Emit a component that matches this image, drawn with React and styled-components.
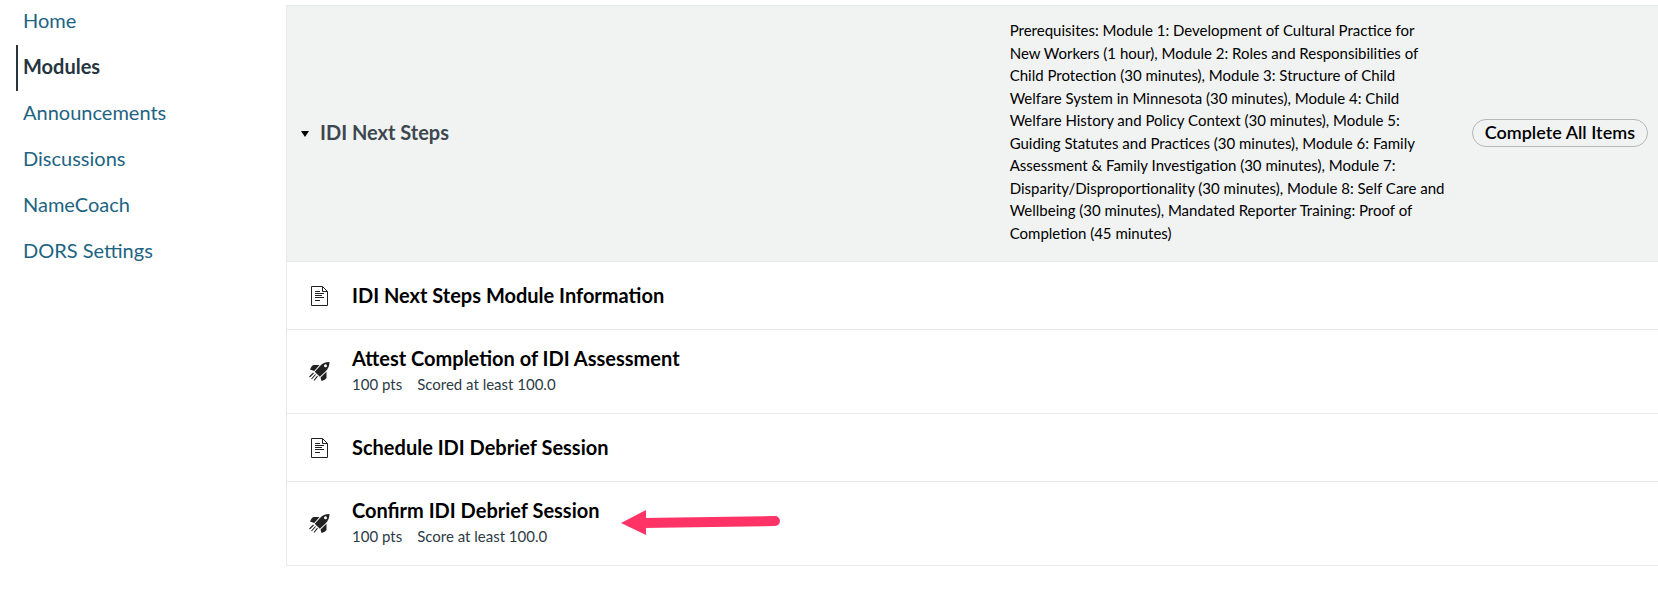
import React from "react";
import styled, { createGlobalStyle } from "styled-components";

const GlobalStyle = createGlobalStyle`
  *, *::before, *::after { box-sizing: border-box; }
  body {
    margin: 0;
    background: #fff;
    color: #000;
    font-family: Lato, "Liberation Sans", sans-serif;
    font-size: 20px;
    line-height: 24px;
  }
`;

const Page = styled.div`
  display: flex;
  align-items: flex-start;
`;

const CourseNav = styled.nav`
  flex: 0 0 286px;
  padding-left: 16px;
  margin-top: -1px;
`;

const NavList = styled.ul`
  list-style: none;
  margin: 0;
  padding: 0;
`;

const NavLink = styled.a`
  display: block;
  padding: 8px 5px 12px;
  line-height: 26px;
  border-left: 2px solid ${({ $active }) => ($active ? "#273540" : "transparent")};
  color: ${({ $active }) => ($active ? "#273540" : "#1d6482")};
  font-weight: ${({ $active }) => ($active ? 700 : 400)};
  text-decoration: none;
`;

const Module = styled.section`
  flex: 1;
  min-width: 0;
  margin: 5px 0 24px;
  border: 1px solid #e8eaea;
  border-right: 0;
`;

const ModuleHeader = styled.header`
  display: flex;
  align-items: center;
  gap: 24px;
  padding: 13px 10px 15px 13px;
  background: #f1f3f3;
`;

const ModuleName = styled.h2`
  flex: 1;
  margin: 0;
  font-size: 20px;
`;

const Toggle = styled.button`
  display: flex;
  align-items: center;
  gap: 10px;
  padding: 0 0 2px;
  border: 0;
  background: none;
  color: #3d474f;
  font: inherit;
  cursor: pointer;
`;

const Caret = styled.svg`
  width: 10px;
  height: 6px;
  margin-top: 4px;
  fill: #000;
`;

const Prerequisites = styled.p`
  flex: 0 1 438px;
  margin: 0;
  padding-bottom: 2px;
  font-size: 15px;
  line-height: 1.5;
`;

const RequirementPill = styled.span`
  flex: none;
  padding: 0 12px 2px;
  border: 1px solid #b4b8b9;
  border-radius: 14px;
  font-family: "Lato Semibold", Lato, "Liberation Sans", sans-serif;
  font-size: 18px;
  line-height: 24px;
  font-weight: 600;
`;

const ItemList = styled.ul`
  list-style: none;
  margin: 0;
  padding: 0;
`;

const Item = styled.li`
  display: flex;
  align-items: center;
  gap: 21px;
  padding: 15px 22px;
  min-height: 68px;
  border-top: 1px solid #e8eaea;
`;

const ItemIcon = styled.svg`
  flex: none;
  width: 22px;
  height: 22px;
`;

const ItemText = styled.div`
  padding-bottom: 2px;
`;

const ItemTitle = styled.a`
  display: block;
  color: #000;
  font-weight: 700;
  line-height: 26px;
  text-decoration: none;
`;

const ItemDetails = styled.div`
  display: flex;
  gap: 15px;
  padding-top: 1px;
  color: #2d3b45;
  font-size: 15px;
`;

const Pointer = styled.svg`
  flex: none;
  width: 159px;
  height: 27px;
`;

function PageIcon() {
  return (
    <ItemIcon viewBox="0 0 22 22" fill="none" stroke="#222" aria-hidden="true">
      <path d="M2.5 1.5H13.5L18.5 6.5V20.5H2.5ZM13.5 1.5V6.5H18.5" />
      <path d="M6 6.5H11M6 8.5H15M6 10.5H13M6 12.5H15M6 15.5H11" />
    </ItemIcon>
  );
}

function RocketIcon() {
  return (
    <ItemIcon viewBox="0 0 22 22" fill="#222" aria-hidden="true">
      <path
        fillRule="evenodd"
        d="M20.500 1C16.500 1 13 2.500 11 5L5.700 10.800L10.800 15.800L16.500 10.500C19 8 20.500 5 20.500 1ZM16.500 3.300A1.500 1.500 0 1 1 16.500 6.300A1.500 1.500 0 1 1 16.500 3.300Z"
      />
      <path d="M10.500 4H5C3.500 4 2 6 1 8.500L5.200 10ZM17.500 10.800V16.500C17.500 18 14.500 19.500 12.500 20L11.500 16.500Z" />
      <path d="M4.500 12L0.500 16M6.500 13.500L2.500 18M8.500 15.200L5 19.500" stroke="#222" strokeWidth="1.1" />
    </ItemIcon>
  );
}

function PointerArrow() {
  return (
    <Pointer viewBox="0 0 159 27" aria-hidden="true">
      <path d="M0 13L25 0V25Z" fill="#ff3366" />
      <path d="M22 13L154 11" stroke="#ff3366" strokeWidth="10" strokeLinecap="round" />
    </Pointer>
  );
}

const navItems = ["Home", "Modules", "Announcements", "Discussions", "NameCoach", "DORS Settings"];

const moduleItems = [
  { title: "IDI Next Steps Module Information", Icon: PageIcon },
  { title: "Attest Completion of IDI Assessment", Icon: RocketIcon, details: ["100 pts", "Scored at least 100.0"] },
  { title: "Schedule IDI Debrief Session", Icon: PageIcon },
  { title: "Confirm IDI Debrief Session", Icon: RocketIcon, details: ["100 pts", "Score at least 100.0"], pointer: true },
];

export default function App() {
  return (
    <>
      <GlobalStyle />
      <Page>
        <CourseNav aria-label="Course">
          <NavList>
            {navItems.map((name) => (
              <li key={name}>
                <NavLink href="#" $active={name === "Modules"} aria-current={name === "Modules" ? "page" : undefined}>
                  {name}
                </NavLink>
              </li>
            ))}
          </NavList>
        </CourseNav>
        <Module>
          <ModuleHeader>
            <ModuleName>
              <Toggle type="button" aria-expanded="true">
                <Caret viewBox="0 0 10 6" aria-hidden="true">
                  <path d="M1 0H9L5 6Z" />
                </Caret>
                IDI Next Steps
              </Toggle>
            </ModuleName>
            <Prerequisites>
              Prerequisites: Module 1: Development of Cultural Practice for New Workers (1 hour), Module 2: Roles and
              Responsibilities of Child Protection (30 minutes), Module 3: Structure of Child Welfare System in
              Minnesota (30 minutes), Module 4: Child Welfare History and Policy Context (30 minutes), Module 5:
              Guiding Statutes and Practices (30 minutes), Module 6: Family Assessment &amp; Family Investigation (30
              minutes), Module 7: Disparity/Disproportionality (30 minutes), Module 8: Self Care and Wellbeing (30
              minutes), Mandated Reporter Training: Proof of Completion (45 minutes)
            </Prerequisites>
            <RequirementPill>Complete All Items</RequirementPill>
          </ModuleHeader>
          <ItemList>
            {moduleItems.map(({ title, Icon, details, pointer }) => (
              <Item key={title}>
                <Icon />
                <ItemText>
                  <ItemTitle href="#">{title}</ItemTitle>
                  {details && (
                    <ItemDetails>
                      {details.map((text) => (
                        <span key={text}>{text}</span>
                      ))}
                    </ItemDetails>
                  )}
                </ItemText>
                {pointer && <PointerArrow />}
              </Item>
            ))}
          </ItemList>
        </Module>
      </Page>
    </>
  );
}
